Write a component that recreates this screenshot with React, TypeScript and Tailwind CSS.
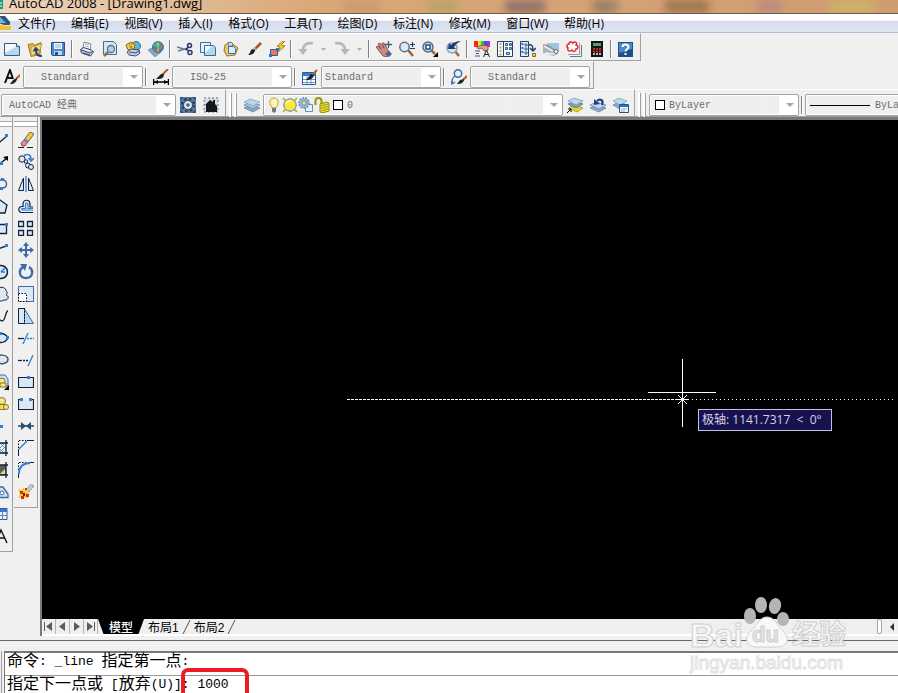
import React, { useState } from 'react';

const ink = '#10233f';
const blue = '#2f7fd6';
const steel = '#3d6ba6';
const pale = '#dbe8f3';

/* Drawings on a 16x16 grid */
const glyphs: Record<string, React.ReactNode> = {
  // standard toolbar
  new: (
    <>
      <path d="M.5 2.5h12l3 3v9H.5z" fill="#b9d6e8" stroke="#2d5f8a" />
      <path d="M1 3h11v3L1 12z" fill="#f0f8fc" />
      <path d="M12.5 2.5v3h3" fill="#fff" stroke="#2d5f8a" />
    </>
  ),
  open: (
    <>
      <path d="M1 3.500l5-1 1 2 7-3-1 12-9 2z" fill="#e0b93f" stroke="#a67c1a" />
      <path d="M4 6l11-3-3 8-8 4z" fill="#f6dc7b" stroke="#b48b22" strokeWidth=".7" />
      <path d="M15 15c-4 0-6-2-6-5" stroke="#23457c" strokeWidth="2" />
      <path d="M5.5 10.5l3-5 4 4z" fill="#23457c" />
    </>
  ),
  save: (
    <>
      <path d="M1.5 1.5h13v13h-12l-1-1z" fill="#4f86c4" stroke="#23528e" />
      <path d="M4 2h8v6H4z" fill="#eef5fb" />
      <path d="M5 4h6M5 6h6" stroke="#9db6d0" />
      <path d="M4 10h8v4H4z" fill="#c3d5e8" />
      <path d="M5 11h3v3H5z" fill="#23528e" />
    </>
  ),
  print: (
    <>
      <path d="M4 7l1-6 7 2-1 6z" fill="#fff" stroke="#7a86a8" />
      <path d="M6 3l4 1M6 5l4 1" stroke="#a9b1c9" />
      <path d="M1.5 8.500l3-2 8 2.500 2 2-3 4-9-3z" fill="#c9cede" stroke="#3f4a75" />
      <path d="M2 9l9 3 3-2M4 12l7 2" stroke="#3f4a75" />
      <path d="M4.500 8l6 2" stroke="#fff" />
    </>
  ),
  preview: (
    <>
      <path d="M1.5.5h10l3 3v10h-13z" fill="#d3e7f2" stroke="#3c719c" />
      <path d="M6 11l-4 4" stroke="#9c6a2f" strokeWidth="2.5" />
      <circle cx="9" cy="8" r="3.5" fill="#b7d2e6" stroke="#55718c" strokeWidth="1.3" />
    </>
  ),
  publish: (
    <>
      <circle cx="11" cy="5" r="4.5" fill="#5fb4d8" stroke="#2f6f9d" />
      <path d="M1 4l5-3 4 3-1 4-6 1z" fill="#f3cd3f" stroke="#8c6a10" />
      <path d="M4 4h1M6 3h1M5 6h2" stroke="#6b5208" />
      <path d="M2 11l4-3 8 1 1 3-4 3-7-1z" fill="#c9cede" stroke="#3f4a75" />
      <path d="M4 11l7 1 3-2" stroke="#3f4a75" />
    </>
  ),
  dwf: (
    <>
      <path d="M0 9l6-3 7 5-6 5z" fill="#8aa5c6" stroke="#6583aa" strokeWidth=".7" />
      <circle cx="10" cy="6" r="5.5" fill="#2f8ec7" stroke="#235f95" strokeWidth=".7" />
      <path d="M5 5c2-4 5-4 8-2-2 3-4 3-8 2z" fill="#5bb55a" />
      <path d="M6 9c4 1 7-1 8-5" stroke="#d96a2e" strokeWidth="1.5" />
      <path d="M10 1v10" stroke="#e7d24c" />
    </>
  ),
  cut: (
    <>
      <path d="M0 6l10 3M1 10l10-3" stroke="#6e7b98" strokeWidth="1.4" />
      <circle cx="12.5" cy="4.5" r="2" stroke="#2a3768" strokeWidth="1.5" />
      <circle cx="13" cy="11.5" r="2" stroke="#2a3768" strokeWidth="1.5" />
      <path d="M9 8l3-2M9 8l3 2" stroke="#2a3768" strokeWidth="1.5" />
    </>
  ),
  copy: (
    <>
      <path d="M.5 1.5h10v10H.5z" fill="#e6f2fa" stroke="#2f6fa8" />
      <path d="M4.5 4.5h9l2 2v8h-11z" fill="#b4d5ea" stroke="#2f6fa8" />
      <path d="M5 5h7l-7 7z" fill="#f1f9fd" />
    </>
  ),
  paste: (
    <>
      <path d="M2 4l5-3 8 6-3 7-8 1-3-5z" fill="#e9c76a" stroke="#9c7420" />
      <path d="M5 1.5h4l1 3-4 1z" fill="#dfe5ee" stroke="#6b7890" />
      <path d="M5.5 5.5h5l2 2v5h-7z" fill="#e1eef8" stroke="#3f6fa8" />
    </>
  ),
  brush: (
    <>
      <path d="M15 2L9 8" stroke="#a4552a" strokeWidth="2.5" />
      <path d="M10 7l-2 2" stroke="#9aa3b0" strokeWidth="3" />
      <path d="M9 9c0 3-3 5-7 5 2-1 2-4 4-6z" fill="#1b1b1b" />
    </>
  ),
  block: (
    <>
      <path d="M1.5 8.5h7v6h-7z" fill="#ef7748" stroke="#1e62b5" />
      <path d="M7 7h3v3H7zM0 13h3v3H0z" fill="#2a6fd0" />
      <path d="M14 0L8 5l3 1-2 5 7-6-4-1 4-4z" fill="#ffd21e" stroke="#8d6a05" strokeWidth=".8" />
    </>
  ),
  undo: (
    <>
      <path d="M15 2.500C9 1 5 4 5 9" stroke="#b5b8ba" strokeWidth="2.6" />
      <path d="M0 8h9.500L5 14z" fill="#b5b8ba" />
    </>
  ),
  pan: (
    <>
      <path d="M0 6l2-1 3 3-3-5 2-1 4 5-2-5h2l4 7 2 3-3 4-4-1z" fill="#c98a80" stroke="#7d4039" strokeWidth=".8" />
      <path d="M9 13l4-3 3 3-3 3z" fill="#44669b" />
      <path d="M12.5 0v7M9 3.5h7" stroke="#3a5b91" strokeWidth="1.3" />
    </>
  ),
  zoom: (
    <>
      <path d="M9 9l5 6" stroke="#a6652b" strokeWidth="2.5" />
      <circle cx="5.5" cy="6" r="4.7" fill="#d9e9f5" stroke="#5c6f84" strokeWidth="1.5" />
      <path d="M13.5 1v5M11 3.5h5M11 7.5h5" stroke="#1f3d6f" strokeWidth="1.2" />
    </>
  ),
  zoomWindow: (
    <>
      <path d="M9 9l4 4" stroke="#a6652b" strokeWidth="2.5" />
      <circle cx="6" cy="6" r="5" fill="#c5dcee" stroke="#5c6f84" strokeWidth="1.5" />
      <path d="M4 4h4v4H4z" fill="#fff" stroke="#234e8a" strokeWidth="1.5" />
      <path d="M16 11v5h-5z" fill="#000" />
    </>
  ),
  zoomPrev: (
    <>
      <path d="M9 9l5 6" stroke="#a6652b" strokeWidth="2.5" />
      <circle cx="7" cy="7" r="5" fill="#d5e6f3" stroke="#8c9bab" strokeWidth="1.5" />
      <path d="M3 8l1-6 2 2c3-3 6-4 10-4-4 2-6 4-7 6l2 2z" fill="#1d3a72" />
    </>
  ),
  properties: (
    <>
      <path d="M0 0h4v6H0z" fill="#f22" />
      <path d="M4 0h3v6H4z" fill="#e8e51a" />
      <path d="M7 0h3v6H7z" fill="#24d03c" />
      <path d="M10 0h3v6h-3z" fill="#2559e8" />
      <path d="M13 0h3v6h-3z" fill="#c026d3" />
      <path d="M3 6l5-2 6 1v4l-4 1-2-3-4 1z" fill="#e3a48c" stroke="#7c4a3a" strokeWidth=".8" />
      <path d="M1 10h5M2 12.5h3M1 15h5" stroke="#355a8f" strokeWidth="1.2" />
      <path d="M9.5 16l3-7 3 7M10.5 13.5h4" stroke="#222" />
    </>
  ),
  designCenter: (
    <>
      <path d="M.5.5h15v15H.5z" fill="#f6f9fc" stroke="#20406f" />
      <path d="M6.5 1v14" stroke="#20406f" />
      <path d="M3.500 2v13" stroke="#d8a62b" strokeWidth="2" strokeDasharray="2 1.5" />
      <path d="M8.5 2.500h2v2h-2zM12.500 2.500h2v2h-2zM8.500 6.500h2v2h-2zM12.500 6.500h2v2h-2zM9.500 11.500h3v2h-3z" fill="#9cc0e2" stroke="#20406f" strokeWidth=".8" />
    </>
  ),
  toolPalettes: (
    <>
      <path d="M.5.5h8v15h-8z" fill="#e5eff8" stroke="#20406f" />
      <path d="M2.5 2v12" stroke="#2a6fc0" strokeWidth="2" strokeDasharray="2 2" />
      <path d="M5 3h2v2H5zM5 7h2v2H5zM5 11h2v2H5z" fill="#fff" stroke="#20406f" strokeWidth=".8" />
      <path d="M8 4c4-1 5 1 5 5M10 7l3 3 3-3" stroke="#20406f" strokeWidth="1.5" />
      <path d="M12.500 12.500h3v3h-3z" fill="#f1d558" stroke="#8a6d10" />
    </>
  ),
  sheetSet: (
    <>
      <path d="M4 2h12v9H4z" fill="#9cc6e0" />
      <path d="M0 3l5 1 8 5-2 5-11-7z" fill="#8a979f" />
      <path d="M0 4l10 6 5-1v4l-5 2-6-2-4-1z" fill="#a9b3b9" />
      <path d="M1 5l9 5M2 12l8 1 5-2" stroke="#edf3f6" strokeWidth="1.500" />
      <circle cx="13" cy="10.500" r="2" fill="#e4eaee" stroke="#66757f" />
    </>
  ),
  markup: (
    <>
      <path d="M4 15.500h11.500V4" stroke="#66788c" />
      <path d="M2 13.500h11.500V2" stroke="#8ea0b4" />
      <path d="M.5.5h12v12H.5z" fill="#fbeeee" />
      <path d="M3 3c0-3 4-2 4-1 2-2 5 0 3 2 3 1 2 4 0 4 0 3-3 3-4 1-2 2-5 1-4-2-2-1-1-4 1-4z" fill="#fff" stroke="#e02b2b" strokeWidth="1.5" />
    </>
  ),
  calculator: (
    <>
      <path d="M2 0h12v16H2z" fill="#151515" />
      <path d="M4 2h8v3H4z" fill="#57a06b" />
      <path d="M4 8h9M4 10.5h9" stroke="#f33" strokeWidth="1.5" strokeDasharray="2 1" />
      <path d="M4 13h9" stroke="#eee" strokeWidth="1.5" strokeDasharray="2 1" />
    </>
  ),
  help: (
    <>
      <path d="M0 1h15v15H0z" fill="#1b4f8d" />
      <path d="M1 2h13v6L1 12z" fill="#4d8ac4" />
      <path d="M4.5 6c0-3.500 6-3.500 6 0 0 2-3 2-3 4.500M7.500 12v2" stroke="#fff" strokeWidth="2" />
    </>
  ),
  // styles toolbar
  textStyle: (
    <>
      <path d="M1 14L6 1l3 9M2 9h6" stroke="#111" strokeWidth="2" />
      <path d="M16 6l-4 4" stroke="#b5622d" strokeWidth="2" />
      <path d="M13 9c0 4-3 6-7 6l3-4z" fill="#222" />
    </>
  ),
  dimStyle: (
    <>
      <path d="M15 0L9 6" stroke="#b5622d" strokeWidth="2.2" />
      <path d="M11 5c0 5-4 5-8 5l5-5z" fill="#222" />
      <path d="M.5 10v6M15.500 10v6M1 13h14" stroke="#000" strokeWidth="1.5" />
      <path d="M1 13l4-2v4zM15 13l-4-2v4z" fill="#000" />
    </>
  ),
  tableStyle: (
    <>
      <path d="M.5 3.5h13v12H.5z" fill="#fff" stroke="#2c5ea6" />
      <path d="M1 4h12v3H1z" fill="#3c78c8" />
      <path d="M1 10.500h12M1 13.500h12M5 7v8M9 7v8" stroke="#6d96cf" />
      <path d="M15 1l-5 5" stroke="#b5622d" strokeWidth="2.2" />
      <path d="M12 6c-1 4-4 5-8 5l5-6z" fill="#222" />
    </>
  ),
  leaderStyle: (
    <>
      <circle cx="7" cy="4.5" r="3.7" fill="#e2eefa" stroke="#3d6ba6" strokeWidth="1.5" />
      <path d="M4 7c-3 2-3 4-3 8M0 12l1 3 3-2" stroke="#3d6ba6" strokeWidth="1.3" />
      <path d="M16 7l-4 4" stroke="#b5622d" strokeWidth="2.2" />
      <path d="M13 10c0 4-3 5-7 5l3-4z" fill="#222" />
    </>
  ),
  // workspaces and layers
  gear: (
    <>
      <path d="M0 0h16v16H0z" fill="#5b7da4" />
      <path d="M0 0h4L0 4zM16 0v4l-4-4zM0 16v-4l4 4zM16 16h-4l4-4z" fill="#34557d" />
      <circle cx="8" cy="8" r="5.8" stroke="#2f4660" strokeWidth="3" strokeDasharray="2.6 1.950" />
      <circle cx="8" cy="8" r="4.500" fill="#dce3ea" stroke="#33475e" />
      <circle cx="8" cy="8" r="1.8" fill="#4a6788" />
    </>
  ),
  home: (
    <>
      <path d="M1 1h14v14H1z" fill="#d6dde4" stroke="#5e7386" strokeDasharray="2 2" />
      <path d="M2 8l5-5 3 2V3h2v4l2 2v6H3V8z" fill="#161616" />
    </>
  ),
  layers: (
    <>
      <path d="M0 11l6-3 10 3-7 4z" fill="#8fa9c8" stroke="#5d7ba3" strokeWidth=".7" />
      <path d="M0 8l6-3 10 3-7 4z" fill="#a9bfd8" stroke="#5d7ba3" strokeWidth=".7" />
      <path d="M0 5l6-3 10 3-7 4z" fill="#bcd6ea" stroke="#7f9dbf" strokeWidth=".7" />
    </>
  ),
  bulb: (
    <>
      <path d="M6 10C2 6 4 1 8 1s6 5 2 9v1H6z" fill="#fdf3a0" stroke="#b8a33a" />
      <path d="M6 5c1-2 2-2 3-1v6" stroke="#fff" />
      <path d="M6 11h4v3l-1 1.500H7L6 14z" fill="#6b7686" />
    </>
  ),
  sun: (
    <>
      <path d="M1 1l3 3M15 1l-3 3M1 15l3-3M15 15l-3-3" stroke="#c0a516" strokeWidth="1.5" />
      <circle cx="8" cy="8" r="6.2" fill="#ffe63c" stroke="#4a86ac" />
      <path d="M4 7c1-3 3-3 5-3" stroke="#fffbd0" strokeWidth="1.5" />
    </>
  ),
  freeze: (
    <>
      <path d="M7.5 7.5h7v7h-7z" fill="#e8eff6" stroke="#6a8db3" />
      <circle cx="6" cy="6" r="5" fill="#9fbcd9" stroke="#6488b0" strokeDasharray="2 1" strokeWidth="1.5" />
      <circle cx="6" cy="6" r="2.3" fill="#e9dc85" stroke="#6488b0" />
    </>
  ),
  lock: (
    <>
      <path d="M1.5 8V4c0-4 6-4 6 0v3" stroke="#a09a12" strokeWidth="2.2" />
      <path d="M6 7l7-2 2 1v8l-7 2-2-1z" fill="#e8df2c" stroke="#8e8710" />
      <path d="M7 9l7-2M7 11.500l7-2M7 14l7-2" stroke="#8e8710" strokeWidth=".8" />
    </>
  ),
  layerCurrent: (
    <>
      <path d="M2 11l5-3 9 3-6 4z" fill="#f1d21c" stroke="#98830c" strokeWidth=".7" />
      <path d="M1 7l6-3 9 3-7 4z" fill="#7f9fc2" stroke="#456792" strokeWidth=".7" />
      <path d="M1 4l6-3 9 3-7 4z" fill="#bcd6ea" stroke="#7594b5" strokeWidth=".7" />
      <path d="M0 16l4-4M1 12h3v3" stroke="#000" />
    </>
  ),
  layerPrev: (
    <>
      <path d="M0 11l6-3 10 3-7 4z" fill="#8fa9c8" stroke="#5d7ba3" strokeWidth=".7" />
      <path d="M0 8l6-3 10 3-7 4z" fill="#bcd6ea" stroke="#5d7ba3" strokeWidth=".7" />
      <path d="M12 8c2-5-2-7-5-4" stroke="#1f457c" strokeWidth="2.200" />
      <path d="M4 2v6l6-1z" fill="#1f457c" />
    </>
  ),
  layerStates: (
    <>
      <path d="M0 8l6-3 8 3-7 4z" fill="#8fa9c8" stroke="#5d7ba3" strokeWidth=".7" />
      <path d="M0 4l6-3 8 3-7 4z" fill="#bcd6ea" stroke="#7f9dbf" strokeWidth=".7" />
      <path d="M6.5 7.5h9v8h-9z" fill="#f5f9fd" stroke="#1d5793" />
      <path d="M7 8h8v2H7z" fill="#2f73b8" />
      <path d="M8 12h6M8 14h4" stroke="#8eaac7" />
    </>
  ),
  // modify palette
  erase: (
    <>
      <path d="M6 8L12 0l4 2-6 8z" fill="#f3c84a" stroke="#52421a" strokeWidth=".8" />
      <path d="M3 11l3-3 4 2-3 4H4z" fill="#e58c87" stroke="#7d3935" strokeWidth=".8" />
      <path d="M5.500 8.500l3.500 2.500 1.500-2-3-2.500z" fill="#5b8fd0" />
      <path d="M0 15.500h6M9 15.500h6" stroke="#222" />
    </>
  ),
  copyObj: (
    <>
      <circle cx="4" cy="5" r="3.2" fill={pale} stroke={ink} />
      <path d="M6.500 6h3v3h-3z" fill={pale} stroke={ink} strokeWidth=".8" />
      <path d="M6 1.500c4-2 7-1 7 4M10.500 4l2.500 3 3-3" stroke={blue} strokeWidth="1.6" />
      <circle cx="10" cy="11.500" r="2.5" fill={pale} stroke={ink} />
      <circle cx="13" cy="13" r="2.5" fill={pale} stroke={ink} />
    </>
  ),
  mirror: (
    <>
      <path d="M5.5 2v12.500h-5z" fill={pale} stroke={ink} />
      <path d="M10.5 2v12.500h5z" fill={pale} stroke={ink} />
      <path d="M8 0v16" stroke={blue} strokeWidth="1.300" />
    </>
  ),
  offset: (
    <>
      <path d="M15 14.500H3c-3-1-3-5 0-6h2V6c0-5 7-5 7 0v3h3" fill={pale} stroke={ink} strokeWidth="1.2" />
      <path d="M15 12H4.500c-1-1-1-1.500 0-1.500h3V6.500c0-2 2.500-2 2.500 0v4h5" stroke={blue} strokeWidth="1.2" />
    </>
  ),
  array: <path d="M.5 1.500h5v5h-5zM9.500 1.500h5v5h-5zM.5 10.500h5v5h-5zM9.500 10.500h5v5h-5z" fill={pale} stroke={ink} strokeWidth="1.3" />,
  move: (
    <path d="M8 0l3 4H9v3h3V5l4 3-4 3V9H9v3h2l-3 4-3-4h2V9H4v2L0 8l4-3v2h3V4H5z" fill={steel} />
  ),
  rotate: (
    <>
      <path d="M11 3c5 3 4 11-3 11S0 6 5 3" stroke={steel} strokeWidth="2.4" />
      <path d="M2 0h7L7 7z" fill={steel} />
    </>
  ),
  scale: (
    <>
      <path d="M.5.5h15v15H.5z" fill={pale} stroke={steel} />
      <path d="M.5 7.5h8v8h-8z" fill="#fff" stroke="#000" strokeDasharray="1.5 1.5" />
    </>
  ),
  stretch: (
    <>
      <path d="M6.5 1l9 14.500h-9z" fill="#bcd8f0" stroke={steel} />
      <path d="M6 .5H.5v15H6" fill={pale} stroke={ink} />
      <path d="M6.5 0v16" stroke="#000" strokeDasharray="1.5 1.5" />
    </>
  ),
  trim: (
    <>
      <path d="M0 8.500h6" stroke={ink} strokeWidth="1.3" />
      <path d="M5 14L10 3" stroke={blue} strokeWidth="1.3" />
      <path d="M9 8.500h7" stroke={blue} strokeDasharray="2 1" strokeWidth="1.3" />
    </>
  ),
  extend: (
    <>
      <path d="M0 8.500h4" stroke={ink} strokeWidth="1.3" />
      <path d="M5 8.500h6" stroke={ink} strokeDasharray="2 1" strokeWidth="1.3" />
      <path d="M10 14l5-11" stroke={blue} strokeWidth="1.3" />
    </>
  ),
  breakPoint: (
    <>
      <path d="M.5 3.5h15v10H.5z" fill={pale} stroke={ink} strokeWidth="1.2" />
      <path d="M9 2h3v3H9z" fill={blue} />
    </>
  ),
  breakObj: (
    <>
      <path d="M3 3.500H.5v10h15v-10H13" fill={pale} stroke={ink} strokeWidth="1.2" />
      <path d="M2 2h3v3H2zM11 2h3v3h-3z" fill={blue} />
    </>
  ),
  join: (
    <>
      <path d="M0 8h16" stroke={ink} strokeWidth="1.3" />
      <path d="M3 4l5 4-5 4zM13 4L8 8l5 4z" fill="#234d7c" />
    </>
  ),
  chamfer: (
    <>
      <path d="M1 .5h7M.5 8V1" stroke="#000" strokeDasharray="1.5 1.5" />
      <path d="M.5 16V9M9 .5h7" stroke={ink} />
      <path d="M1 9l8-8" stroke={blue} strokeWidth="1.5" />
    </>
  ),
  fillet: (
    <>
      <path d="M1 .5h7M.5 8V1" stroke="#000" strokeDasharray="1.5 1.5" />
      <path d="M.5 16v-5M11 .5h5" stroke={ink} />
      <path d="M1 12C1 5 5 1 12 1" stroke={blue} strokeWidth="1.8" />
    </>
  ),
  explode: (
    <>
      <path d="M8 6l5-6 3 2-5 6z" fill="#c4cbd3" stroke="#566" strokeWidth=".7" strokeDasharray="2 1" />
      <path d="M0 5l4 1 1-3 2 3 3-1-1 3 3 2-3 1 1 4-3-2-2 3-1-3-4 1 2-4z" fill="#f7c928" />
      <path d="M2 7h3v3H2zM7 4h2v2H7zM8 10h3v3H8zM3 12h3v3H3z" fill="#d6281c" />
      <path d="M5 9h2v3H5z" fill="#7d1610" />
    </>
  ),
  // draw palette
  line: (
    <>
      <path d="M2 14L14 4" stroke={ink} strokeWidth="1.3" />
      <path d="M12 2h3v3h-3z" fill={blue} />
    </>
  ),
  ray: (
    <>
      <path d="M2 14L14 4" stroke={ink} strokeWidth="1.5" />
      <path d="M15 2v5l-5-4z" fill="#000" />
      <path d="M7 8h3v3H7z" fill={blue} />
    </>
  ),
  pline: (
    <>
      <path d="M2 4h7c6 0 6 8 0 8H7" stroke={steel} strokeWidth="1.5" />
      <path d="M8 2h3v3H8zM7 11h3v3H7z" fill={blue} />
    </>
  ),
  polygon: <path d="M7 2l7 5-2 8H3L1 7z" fill={pale} stroke={ink} strokeWidth="1.3" />,
  rect: (
    <>
      <path d="M1 4.500h12.500v9H1z" fill={pale} stroke={ink} strokeWidth="1.3" />
      <path d="M12 3h3v3h-3z" fill={blue} />
    </>
  ),
  arc: (
    <>
      <path d="M1 14C3 7 8 5 14 4" stroke={ink} strokeWidth="1.3" />
      <path d="M12 2h3v3h-3z" fill={blue} />
    </>
  ),
  circle: (
    <>
      <circle cx="8" cy="8" r="6.5" fill={pale} stroke={ink} strokeWidth="1.5" />
      <path d="M8 8l4-4M8 8h4" stroke={blue} strokeWidth="1.5" />
    </>
  ),
  cloud: <path d="M4 5c0-5 9-5 9 0 2 1 1 3 0 4 4 1 2 6-2 5-3 2-7 1-8-2-3-2-2-6 1-7z" fill={pale} stroke={ink} />,
  spline: <path d="M1 4c3 0 4 9 8 9s3-10 6-10" stroke={ink} strokeWidth="1.3" />,
  ellipse: (
    <>
      <path d="M1 8c2-6 11-6 14 0-3 6-12 6-14 0z" fill={pale} stroke={ink} strokeWidth="1.3" />
      <path d="M13 6h3v3h-3zM6 2h3v3H6z" fill={blue} />
    </>
  ),
  ellipseArc: <path d="M2 6c3-4 12-4 13 1 0 5-8 6-11 3" fill={pale} stroke="#4b5563" strokeWidth="1.5" />,
  insertBlock: (
    <>
      <path d="M1 1h11l3 4v7H1z" fill="#cde4f4" stroke={steel} />
      <circle cx="9" cy="7" r="3" fill="#f3e58c" stroke="#8a7a1d" />
      <path d="M7 9h6v4H7z" fill="#f3e58c" stroke="#8a7a1d" />
      <path d="M16 11v5h-5z" fill="#000" />
    </>
  ),
  makeBlock: (
    <>
      <circle cx="9" cy="5" r="3.5" fill="#f3e58c" stroke="#8a7a1d" />
      <path d="M5 8.500h8v5H5z" fill="#f7d95a" stroke="#8a7a1d" />
      <circle cx="13" cy="11" r="2.5" fill="#f3e58c" stroke="#8a7a1d" />
    </>
  ),
  point: <path d="M7 7h3v3H7z" fill={blue} />,
  hatch: (
    <>
      <path d="M3 3h10v10H3z" fill="#eaf2fa" />
      <path d="M3 12l9-9M6 13l7-7M3 8l5-5M3 5l8 8M7 3l6 6" stroke="#5a92cc" />
      <path d="M1 3h14M1 13h14M3 0v16M13 0v16" stroke={ink} strokeWidth="1.3" />
    </>
  ),
  gradient: (
    <>
      <path d="M3 3h10v10H3z" fill="#59604c" />
      <path d="M7 12l5-5v5z" fill="#e5dd8a" />
      <path d="M1 3h14M1 13h14M3 0v16M13 0v16" stroke={ink} strokeWidth="1.3" />
    </>
  ),
  region: (
    <>
      <path d="M1 13.500h14V10L10 3H5C2 5 1 9 1 13.500z" fill="#cfe2f2" stroke={steel} strokeWidth="1.3" />
      <circle cx="9" cy="9" r="2" fill="#fff" stroke={steel} />
    </>
  ),
  table: (
    <>
      <path d="M1 2.500h13v11H1z" fill="#e9f1fb" stroke="#2c5ea6" />
      <path d="M1 3h13v3H1z" fill="#3c78c8" />
      <path d="M1 9.500h13M5.500 6v8M9.500 6v8" stroke="#5a88c8" />
    </>
  ),
  mtext: <path d="M3 15L8 2l6 13M5 10h7" stroke="#111" strokeWidth="1.4" />,
};

const Icon: React.FC<{ name: string; flip?: boolean }> = ({ name, flip }) => (
  <svg viewBox="0 0 16 16" className={flip ? 'size-4 shrink-0 -scale-x-100' : 'size-4 shrink-0'} fill="none" aria-hidden="true">
    {glyphs[name]}
  </svg>
);

const ToolButton: React.FC<{ name: string; flip?: boolean }> = ({ name, flip }) => (
  <button type="button" aria-label={name} className="flex h-[22px] w-[23px] shrink-0 items-center justify-center">
    <Icon name={name} flip={flip} />
  </button>
);

const Caret: React.FC = () => (
  <button type="button" aria-label="history" className="flex h-[22px] w-[13px] shrink-0 items-center justify-center">
    <svg viewBox="0 0 5 3" className="h-[3px] w-[5px]" aria-hidden="true">
      <path d="M0 0h5L2.500 3z" fill="#a9b0c4" />
    </svg>
  </button>
);

const Separator: React.FC = () => (
  <span className="mx-[2px] h-[18px] w-[2px] shrink-0 border-l border-[#808080] bg-white" />
);

const Grip: React.FC = () => (
  <span className="mr-[3px] flex h-6 w-2 shrink-0 justify-between">
    <span className="w-[3px] border-r border-[#a0a0a0] bg-white" />
    <span className="w-[3px] border-r border-[#a0a0a0] bg-white" />
  </span>
);

type ComboProps = {
  label: string;
  value: string;
  className: string;
  pad: string;
  children?: React.ReactNode;
};

const Combo: React.FC<ComboProps> = ({ label, value, className, pad, children }) => (
  <div className={`relative flex h-[22px] shrink-0 items-center rounded-[2px] border border-[#a3a3a3] bg-white p-px ${className}`}>
    <select
      aria-label={label}
      className={`h-full w-full appearance-none bg-linear-to-l from-white from-[18px] to-[#efefef] to-[18px] font-['Liberation_Mono','Noto_Sans_CJK_SC',monospace] text-[10px] text-[#6d6d6d] outline-none ${pad}`}
    >
      <option>{value}</option>
    </select>
    {children}
    <svg viewBox="0 0 8 4" className="pointer-events-none absolute right-1 bottom-2 h-1 w-2" aria-hidden="true">
      <path d="M0 0h8L4 4z" fill="#a6a6a6" />
    </svg>
  </div>
);

const barClass = 'flex h-7 items-center border-t border-b border-t-white border-b-[#a0a0a0] pt-1';

const menus = [
  '文件(F)', '编辑(E)', '视图(V)', '插入(I)', '格式(O)', '工具(T)',
  '绘图(D)', '标注(N)', '修改(M)', '窗口(W)', '帮助(H)',
];

const drawTools = [
  'line', 'ray', 'pline', 'polygon', 'rect', 'arc', 'circle', 'cloud', 'spline', 'ellipse',
  'ellipseArc', 'insertBlock', 'makeBlock', 'point', 'hatch', 'gradient', 'region', 'table', 'mtext',
];

const modifyTools = [
  'erase', 'copyObj', 'mirror', 'offset', 'array', 'move', 'rotate', 'scale', 'stretch',
  'trim', 'extend', 'breakPoint', 'breakObj', 'join', 'chamfer', 'fillet', 'explode',
];

const TitleBar: React.FC = () => (
  <header className="relative flex h-[14px] shrink-0 items-end overflow-hidden border-b border-[#6b5a4a] bg-linear-to-r from-[#ecd5bd] via-[#d9a878] via-35% to-[#cf9c72]">
    <div className="absolute inset-0 flex justify-around pl-80 blur-[4px]">
      <span className="w-9 bg-[#c99b70]" />
      <span className="w-7 bg-[#b9a268]" />
      <span className="w-10 bg-[#927068]" />
      <span className="w-6 bg-[#9a7d66]" />
      <span className="w-11 bg-[#9d754f]" />
      <span className="w-6 bg-[#b98b7c]" />
      <span className="w-11 bg-[#cdb268]" />
    </div>
    <svg viewBox="0 0 4 9" className="mb-1 h-[9px] w-1" aria-hidden="true">
      <path d="M0 0h3v9H0z" fill="#179b82" />
      <path d="M0 3h2M0 6h2" stroke="#fff" />
    </svg>
    <h1 className="relative ml-[5px] font-['Open_Sans',sans-serif] text-[13px] leading-5 whitespace-nowrap text-black">
      AutoCAD 2008 - [Drawing1.dwg]
    </h1>
  </header>
);

const MenuBar: React.FC = () => (
  <nav className="flex h-[19px] shrink-0 items-center overflow-hidden border-b border-[#b5bbd3] bg-linear-to-b from-white from-35% via-[#d6dbed] via-40% to-[#e0e5f4]">
    <svg viewBox="0 0 11 16" className="h-4 w-[11px] shrink-0" aria-hidden="true">
      <path d="M0 1h5l5 6v8H0z" fill="#2c567f" />
      <path d="M0 2l6 6H0z" fill="#7fb1d2" />
      <path d="M0 9c4 2 7 2 11 1v5H0z" fill="#f2c230" />
      <path d="M0 9c4 2 7 2 11 1" stroke="#fff3b0" fill="none" />
    </svg>
    <ul className="ml-[7px] flex w-[586px] justify-between pt-px">
      {menus.map(m => (
        <li key={m}>
          <button type="button" className="block font-['Open_Sans','Noto_Sans_CJK_SC',sans-serif] text-[12px] leading-4 whitespace-nowrap text-black">
            {m}
          </button>
        </li>
      ))}
    </ul>
  </nav>
);

const StandardToolbar: React.FC = () => (
  <div className={`${barClass} w-fit border-r border-r-[#a0a0a0] pr-[3px]`}>
    {['new', 'open', 'save'].map(n => <ToolButton key={n} name={n} />)}
    <Separator />
    {['print', 'preview', 'publish', 'dwf'].map(n => <ToolButton key={n} name={n} />)}
    <Separator />
    {['cut', 'copy', 'paste', 'brush', 'block'].map(n => <ToolButton key={n} name={n} />)}
    <Separator />
    <ToolButton name="undo" />
    <Caret />
    <ToolButton name="undo" flip />
    <Caret />
    <Separator />
    {['pan', 'zoom', 'zoomWindow', 'zoomPrev'].map(n => <ToolButton key={n} name={n} />)}
    <Separator />
    {['properties', 'designCenter', 'toolPalettes', 'sheetSet', 'markup', 'calculator'].map(n => (
      <ToolButton key={n} name={n} />
    ))}
    <Separator />
    <ToolButton name="help" />
  </div>
);

const StylesToolbar: React.FC = () => (
  <div className={`${barClass} w-fit border-r border-r-[#a0a0a0] pr-[3px]`}>
    <ToolButton name="textStyle" />
    <Combo label="text style" value="Standard" className="w-[120px]" pad="pl-4" />
    <Separator />
    <ToolButton name="dimStyle" />
    <Combo label="dimension style" value="ISO-25" className="w-[120px]" pad="pl-4" />
    <Separator />
    <ToolButton name="tableStyle" />
    <Combo label="table style" value="Standard" className="w-[120px]" pad="pl-[2px]" />
    <Separator />
    <ToolButton name="leaderStyle" />
    <Combo label="leader style" value="Standard" className="w-[120px]" pad="pl-4" />
  </div>
);

const LayersToolbar: React.FC = () => (
  <div className="flex overflow-hidden">
    <div className={`${barClass} shrink-0 border-r border-r-[#a0a0a0] pr-[3px] pl-px`}>
      <Combo label="workspace" value="AutoCAD 经典" className="w-[175px]" pad="pl-[6px]" />
      <ToolButton name="gear" />
      <ToolButton name="home" />
    </div>
    <div className={`${barClass} shrink-0 border-r border-r-[#a0a0a0] pr-[2px] pl-[3px]`}>
      <Grip />
      <ToolButton name="layers" />
      <Combo label="layer" value="0" className="w-[300px]" pad="pl-[82px]">
        <span className="pointer-events-none absolute left-[2px] flex items-center">
          <Icon name="bulb" />
          <Icon name="sun" />
          <Icon name="freeze" />
          <Icon name="lock" />
          <span className="ml-[3px] size-[10px] border border-black bg-white" />
        </span>
      </Combo>
      <ToolButton name="layerCurrent" />
      <ToolButton name="layerPrev" />
      <ToolButton name="layerStates" />
    </div>
    <div className={`${barClass} min-w-0 flex-1 pl-[3px]`}>
      <Grip />
      <Combo label="color" value="ByLayer" className="w-[150px]" pad="pl-[18px]">
        <span className="pointer-events-none absolute left-[5px] size-[10px] border border-black bg-white" />
      </Combo>
      <Separator />
      <Combo label="linetype" value="ByLayer" className="w-[200px]" pad="pl-[68px]">
        <span className="pointer-events-none absolute left-1 w-[60px] border-t border-black" />
      </Combo>
    </div>
  </div>
);

const Palette: React.FC<{ tools: string[]; className: string }> = ({ tools, className }) => (
  <div className={`flex flex-col items-end self-start overflow-hidden border-r border-b border-[#a0a0a0] pt-1 pb-1 ${className}`}>
    <span className="mb-[2px] h-[6px] w-full shrink-0 border-y border-[#a8a8a8] bg-white" />
    {tools.map(t => <ToolButton key={t} name={t} />)}
  </div>
);

const Canvas: React.FC = () => (
  <div className="relative min-h-0 flex-1 overflow-hidden bg-black">
    <svg className="absolute inset-0 size-full" shapeRendering="crispEdges" stroke="#fff" aria-hidden="true">
      <path d="M640.500 239v68M606 272.500h68" />
      <path d="M305 279.500h335" strokeDasharray="3 1" />
      <path d="M642 279.500h212" strokeDasharray="1 3" />
      <path d="M636 275l9 9M645 275l-9 9M635 279.500h11" />
    </svg>
    <div className="absolute top-[289px] left-[656px] flex h-[22px] w-[134px] items-center border border-[#c3c3dd] bg-[#17124f] pl-[3px] font-['Open_Sans','Noto_Sans_CJK_SC',sans-serif] text-[12px] whitespace-pre text-[#d3d3e6]">
      {'极轴: 1141.7317  <  0°'}
    </div>
  </div>
);

const TabArrow: React.FC<{ label: string; d: string }> = ({ label, d }) => (
  <button type="button" aria-label={label} className="flex h-full w-[14px] items-center justify-center border-r border-[#b5b5b5]">
    <svg viewBox="0 0 9 9" className="size-[9px]" aria-hidden="true">
      <path d={d} fill="#5c5c5c" />
    </svg>
  </button>
);

const Slash: React.FC = () => (
  <svg viewBox="0 0 9 15" className="h-full w-[9px] shrink-0" aria-hidden="true">
    <path d="M1 15L8 1" stroke="#555" />
  </svg>
);

const LayoutTabs: React.FC = () => {
  const [active, setActive] = useState('模型');
  return (
    <div className="flex h-[17px] shrink-0 items-stretch border-b-2 border-white bg-[#efefef] font-['Liberation_Sans','Noto_Sans_CJK_SC',sans-serif] text-[12px] leading-[17px]">
      <TabArrow label="first" d="M0 0h1v9H0zM8 0v9L2 4.500z" />
      <TabArrow label="previous" d="M7 0v9L1 4.500z" />
      <TabArrow label="next" d="M2 0v9l6-4.500z" />
      <TabArrow label="last" d="M8 0h1v9H8zM1 0v9l6-4.500z" />
      {['模型', '布局1', '布局2'].map(tab => (
        <React.Fragment key={tab}>
          <button
            type="button"
            onClick={() => setActive(tab)}
            className={
              tab === active
                ? 'bg-black px-[11px] pt-px font-medium text-white [clip-path:polygon(0_0,100%_0,88%_100%,12%_100%)]'
                : 'px-[3px] pt-px text-black'
            }
          >
            {tab}
          </button>
          {tab === active ? <span className="w-px" /> : <Slash />}
        </React.Fragment>
      ))}
      <div className="ml-auto flex">
        <span className="mr-1 w-[5px] rounded-[2px] border border-[#a5a5a5] bg-white" />
        <button type="button" aria-label="scroll left" className="flex w-3 items-center justify-center">
          <svg viewBox="0 0 5 8" className="h-2 w-[5px]" aria-hidden="true">
            <path d="M4 0v8L0 4z" fill="#333" />
          </svg>
        </button>
      </div>
    </div>
  );
};

const CommandWindow: React.FC = () => {
  const [value, setValue] = useState('1000');
  return (
    <section className="relative flex h-[52px] shrink-0 overflow-hidden pt-[10px] font-['Liberation_Mono','Noto_Sans_CJK_SC',monospace] text-[13px] text-black">
      <span className="mr-[2px] w-[2px] border-r border-[#a0a0a0]" />
      <div className="min-w-0 flex-1 border-t-2 border-l border-[#777] bg-white whitespace-pre">
        <p className="flex h-[22px] items-start pl-[2px] leading-[18px]">
          <span className="text-[16px]">命令</span>
          {': _line '}
          <span className="text-[16px]">指定第一点</span>:
        </p>
        <label className="flex items-center border-t border-[#999] pl-[2px] leading-[18px]">
          <span className="text-[16px]">指定下一点或</span>
          {' ['}
          <span className="text-[16px]">放弃</span>
          {'(U)]: '}
          <input
            value={value}
            onChange={e => setValue(e.target.value)}
            className="h-[18px] min-w-0 flex-1 bg-transparent outline-none"
          />
        </label>
      </div>
      <span className="pointer-events-none absolute top-[27px] left-[181px] h-9 w-[68px] rounded-[7px] border-4 border-[#ec1c24]" />
    </section>
  );
};

const Watermark: React.FC = () => (
  <div className="pointer-events-none absolute right-[50px] bottom-[18px] w-[158px] font-['Liberation_Sans','Noto_Sans_CJK_SC',sans-serif] whitespace-nowrap text-[#f6f6f6] [-webkit-text-stroke:1px_#cfcfcf]">
    <div className="relative flex h-[54px] items-end leading-8 font-bold">
      <span className="text-[34px]">Bai</span>
      <svg viewBox="0 0 46 54" className="h-[54px] w-[46px] shrink-0" aria-hidden="true">
        <g fill="#b5b5b5">
          <ellipse cx="7" cy="19" rx="6" ry="8" />
          <ellipse cx="18" cy="8" rx="6" ry="8" />
          <ellipse cx="32" cy="9" rx="6" ry="8" transform="rotate(12 32 9)" />
          <ellipse cx="40" cy="22" rx="6" ry="7" />
        </g>
        <path d="M24 20c8 0 10 9 16 14 8 7 4 16-5 16H13c-9 0-13-9-5-16 6-5 8-14 16-14z" fill="#f8f8f8" stroke="#d0d0d0" />
      </svg>
      <span className="absolute bottom-0 left-[62px] text-[22px] text-[#e4e4e4]">du</span>
      <span className="ml-[3px] text-[27px]">经验</span>
    </div>
    <div className="text-[19px] leading-6 text-white [-webkit-text-stroke:1px_#dedede]">jingyan.baidu.com</div>
  </div>
);

const App: React.FC = () => {
  return (
    <div className="relative flex h-screen flex-col overflow-hidden bg-[#f0f0f0]">
      <TitleBar />
      <MenuBar />
      <div className="shrink-0">
        <StandardToolbar />
        <StylesToolbar />
        <LayersToolbar />
      </div>
      <main className="flex min-h-0 flex-1">
        <Palette tools={drawTools} className="w-[13px]" />
        <Palette tools={modifyTools} className="mr-[2px] ml-px w-6" />
        <div className="flex min-w-0 flex-1 flex-col border-t-3 border-l-2 border-[#7a7a7a]">
          <Canvas />
          <LayoutTabs />
        </div>
      </main>
      <div className="h-[5px] shrink-0 border-b border-[#696969]" />
      <CommandWindow />
      <Watermark />
    </div>
  );
};

export default App;
